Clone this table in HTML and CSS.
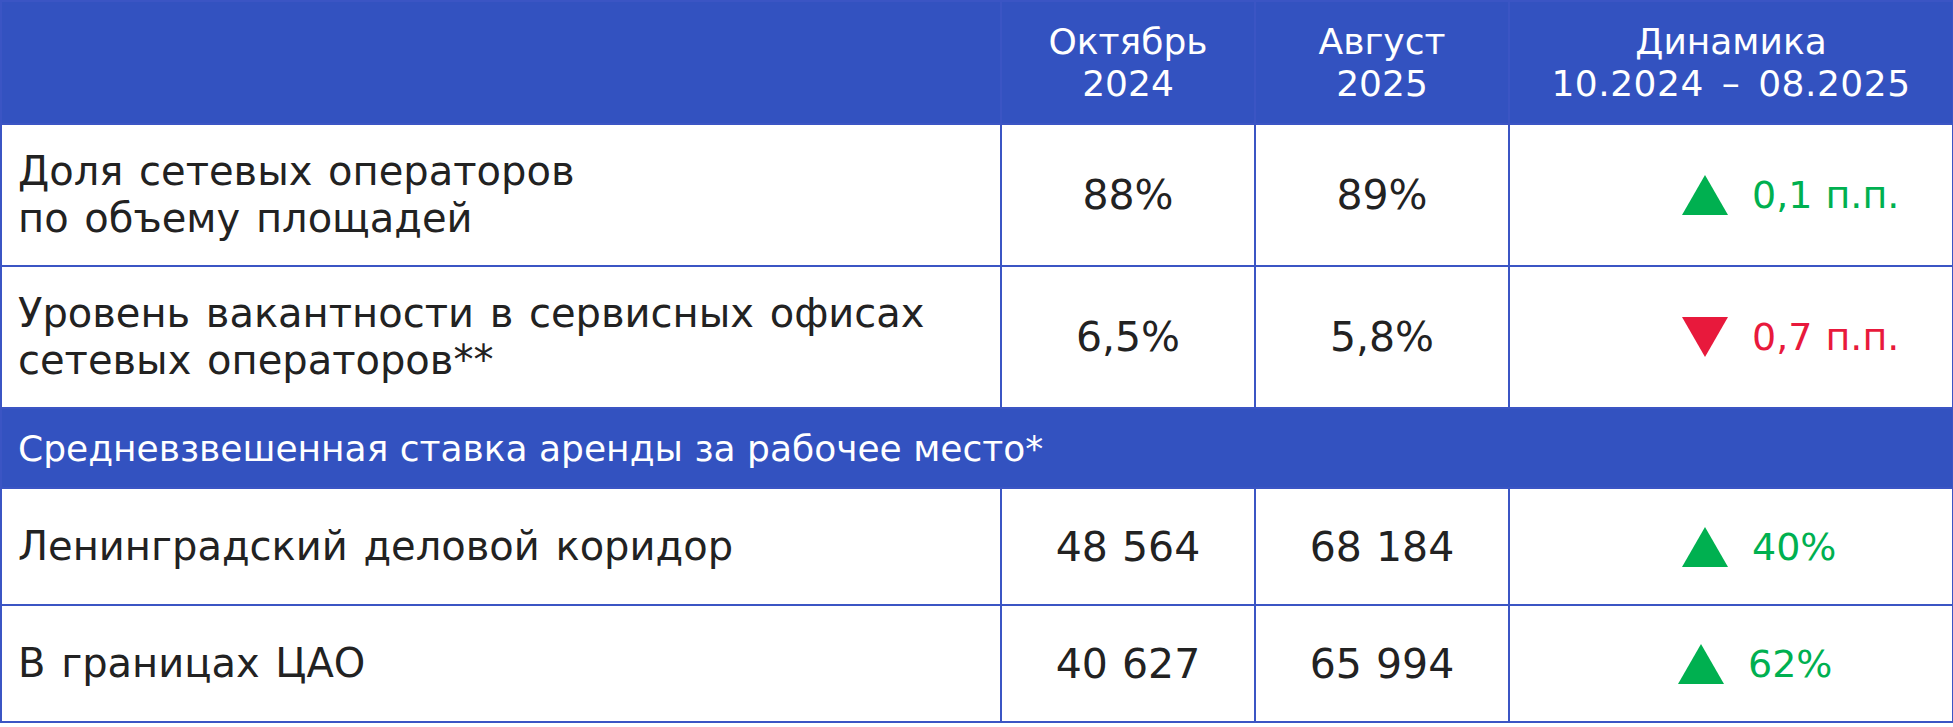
FILE: index.html
```html
<!DOCTYPE html>
<html lang="ru">
<head>
<meta charset="utf-8">
<link rel="stylesheet" href="styles.css">
</head>
<body>
<table class="data">
  <colgroup>
    <col class="c-name">
    <col class="c-num">
    <col class="c-num">
    <col class="c-dyn">
  </colgroup>
  <tr class="head">
    <th></th>
    <th>Октябрь<br>2024</th>
    <th>Август<br>2025</th>
    <th>Динамика<br><span class="range">10.2024 – 08.2025</span></th>
  </tr>
  <tr class="tall">
    <td class="name">Доля сетевых операторов<br>по объему площадей</td>
    <td class="num">88%</td>
    <td class="num">89%</td>
    <td class="dyn"><div class="chg up"><span class="tri"></span><span>0,1 п.п.</span></div></td>
  </tr>
  <tr class="tall">
    <td class="name">Уровень вакантности в сервисных офисах<br>сетевых операторов**</td>
    <td class="num">6,5%</td>
    <td class="num">5,8%</td>
    <td class="dyn"><div class="chg down"><span class="tri"></span><span>0,7 п.п.</span></div></td>
  </tr>
  <tr class="sub">
    <td colspan="4">Средневзвешенная ставка аренды за рабочее место*</td>
  </tr>
  <tr class="mid">
    <td class="name">Ленинградский деловой коридор</td>
    <td class="num">48 564</td>
    <td class="num">68 184</td>
    <td class="dyn"><div class="chg up"><span class="tri"></span><span>40%</span></div></td>
  </tr>
  <tr class="mid">
    <td class="name">В границах ЦАО</td>
    <td class="num">40 627</td>
    <td class="num">65 994</td>
    <td class="dyn"><div class="chg up shift"><span class="tri"></span><span>62%</span></div></td>
  </tr>
</table>
</body>
</html>
```
FILE: styles.css
```css
html, body {
  margin: 0;
  padding: 0;
  background: #ffffff;
}

body {
  font-family: "DejaVu Sans", Verdana, sans-serif;
  color: #222222;
}

.data {
  border-collapse: collapse;
  table-layout: fixed;
  width: 1952px;
}

.c-name { width: 1000px; }
.c-num { width: 254px; }
.c-dyn { width: 444px; }

.data th,
.data td {
  border: 2px solid #3b55c4;
  padding: 0;
}

.head th {
  background: #3352c0;
  color: #ffffff;
  font-weight: normal;
  font-size: 36px;
  line-height: 42px;
  height: 121px;
  text-align: center;
  vertical-align: middle;
}

.range {
  word-spacing: 6px;
  letter-spacing: 0.5px;
}

.tall td { height: 140px; }
.mid td { height: 115px; }

.name {
  font-size: 40px;
  line-height: 47px;
  word-spacing: 3px;
  padding-left: 16px !important;
  vertical-align: middle;
}

.num {
  font-size: 41px;
  word-spacing: 1px;
  text-align: center;
  vertical-align: middle;
}

.dyn {
  vertical-align: middle;
}

.chg {
  display: flex;
  align-items: center;
  gap: 24px;
  padding-left: 172px;
  font-size: 38px;
  word-spacing: 1px;
}

.chg.shift {
  padding-left: 168px;
}

.tri {
  width: 0;
  height: 0;
  border-left: 23px solid transparent;
  border-right: 23px solid transparent;
}

.up { color: #00b050; }
.up .tri { border-bottom: 40px solid #00b050; }

.down { color: #e8193c; }
.down .tri { border-top: 40px solid #e8193c; }

.sub td {
  background: #3352c0;
  color: #ffffff;
  font-size: 36px;
  height: 78px;
  padding-left: 16px;
  vertical-align: middle;
}
```
